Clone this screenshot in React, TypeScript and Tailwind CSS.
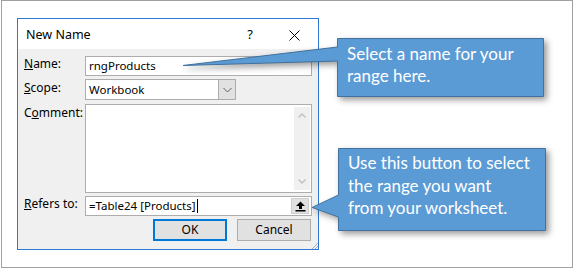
import React from "react";

const ui = { fontFamily: '"Noto Sans", "Open Sans", sans-serif' };
const call = { fontFamily: 'Lato, "Noto Sans", sans-serif' };

function Label({ children }: { children: React.ReactNode }) {
  return (
    <div className="w-[61px] shrink-0 text-[12px] leading-[12px] text-[#000]" style={ui}>
      {children}
    </div>
  );
}

export default function App() {
  return (
    <div className="relative w-[574px] h-[270px] bg-white overflow-hidden">
      <div className="ml-[1px] w-[572px] h-[268px] border border-[#a0a0a0] bg-white pl-[15px] pt-[17px]">
        {/* Dialog */}
        <div className="w-[302px] h-[232px] border border-[#2b79d2] bg-[#f0f0f0] flex flex-col" style={ui}>
          {/* title bar */}
          <div className="h-[30px] bg-white flex items-center pl-[8px] shrink-0">
            <span className="text-[12.5px] text-black mt-[2px]">New Name</span>
            <span className="ml-auto text-[13px] text-black mt-[2px]">?</span>
            <svg width="11" height="11" viewBox="0 0 11 11" className="ml-[36px] mr-[18px] mt-[2px]">
              <path d="M0.5 0.5 L10.5 10.5 M10.5 0.5 L0.5 10.5" stroke="#000" strokeWidth="1" />
            </svg>
          </div>
          {/* body */}
          <div className="flex-1 pl-[6px] pr-[6px] pt-[7px] flex flex-col relative">
            {/* Name */}
            <div className="flex items-start h-[20px]">
              <Label>
                <div className="pt-[2px]"><span className="underline">N</span>ame:</div>
              </Label>
              <div className="w-[227px] h-[20px] border border-[#adadad] bg-white flex items-center pl-[3px] text-[11.5px] text-black">
                rngProducts
              </div>
            </div>
            {/* Scope */}
            <div className="flex items-start h-[21px] mt-[3px]">
              <Label>
                <div className="pt-[3px]"><span className="underline">S</span>cope:</div>
              </Label>
              <div className="w-[151px] h-[21px] border border-[#adadad] bg-white flex items-stretch text-[11.5px] text-black">
                <div className="flex-1 flex items-center pl-[3px]">Workbook</div>
                <div className="w-[17px] bg-[#e1e1e1] border-l border-[#adadad] flex items-center justify-center">
                  <svg width="9" height="6" viewBox="0 0 9 6">
                    <path d="M0.5 1 L4.5 5 L8.5 1" fill="none" stroke="#606060" strokeWidth="1" />
                  </svg>
                </div>
              </div>
            </div>
            {/* Comment */}
            <div className="flex items-start h-[89px] mt-[4px]">
              <Label>
                <div className="pt-[3px]">C<span className="underline">o</span>mment:</div>
              </Label>
              <div className="w-[227px] h-[89px] border border-[#adadad] bg-white flex justify-end pt-[2px] pb-[2px] pr-[1px]">
                <div className="w-[16px] h-full bg-[#f0f0f0] flex flex-col items-center justify-between py-[6px]">
                  <svg width="8" height="5" viewBox="0 0 8 5">
                    <path d="M0.5 4.5 L4 1 L7.5 4.5" fill="none" stroke="#c2c2c2" strokeWidth="1.5" />
                  </svg>
                  <svg width="8" height="5" viewBox="0 0 8 5">
                    <path d="M0.5 0.5 L4 4 L7.5 0.5" fill="none" stroke="#c2c2c2" strokeWidth="1.5" />
                  </svg>
                </div>
              </div>
            </div>
            {/* Refers to */}
            <div className="flex items-start h-[20px] mt-[3px]">
              <Label>
                <div className="pt-[2px]"><span className="underline">R</span>efers to:</div>
              </Label>
              <div className="w-[227px] h-[20px] border border-[#adadad] bg-white flex items-center text-[11.5px] text-black">
                <div className="flex-1 flex items-center pl-[3px]">
                  <span>=Table24 [Products]</span>
                  <span className="w-[1px] h-[14px] bg-black ml-[1px]" />
                </div>
                <div className="w-[18px] h-[16px] mr-[2px] bg-[#e1e1e1] border border-[#cfcfcf] flex items-center justify-center">
                  <svg width="11" height="11" viewBox="0 0 11 11">
                    <path d="M5.5 0.5 L10 5 L7 5 L7 8 L4 8 L4 5 L1 5 Z" fill="#000" />
                    <rect x="0.5" y="9" width="10" height="1.5" fill="#000" />
                  </svg>
                </div>
              </div>
            </div>
            {/* Buttons */}
            <div className="flex justify-end mt-[3px] pr-[1px]">
              <div className="w-[74px] h-[22px] border-2 border-[#0078d7] bg-[#e1e1e1] flex items-center justify-center text-[12px] text-black">
                OK
              </div>
              <div className="w-[74px] h-[22px] border border-[#adadad] bg-[#e1e1e1] flex items-center justify-center text-[12px] text-black ml-[10px]">
                Cancel
              </div>
            </div>
            {/* resize grip */}
            <svg width="7" height="7" viewBox="0 0 7 7" className="absolute right-[0px] bottom-[0px]">
              <path d="M1 7 L7 1 M4 7 L7 4" stroke="#b0b0b0" strokeWidth="1" />
            </svg>
          </div>
        </div>
      </div>

      {/* Callout shapes */}
      <svg
        width="574"
        height="270"
        viewBox="0 0 574 270"
        className="absolute left-0 top-0 pointer-events-none"
        style={{ filter: "drop-shadow(3px 3px 3px rgba(0,0,0,0.4))" }}
      >
        <path
          d="M337.5 38.5 H543.5 V96.5 H337.5 V61 L183 65.5 L337.5 47 Z"
          fill="#5b9bd5"
          stroke="#41719c"
          strokeWidth="1"
          strokeLinejoin="miter"
        />
        <path
          d="M338.5 148.5 H545.5 V230.5 H338.5 V217 L312 207.5 L338.5 195 Z"
          fill="#5b9bd5"
          stroke="#41719c"
          strokeWidth="1"
          strokeLinejoin="miter"
        />
      </svg>
      <div
        className="absolute left-[347px] top-[43px] w-[196px] text-[17px] leading-[22px] text-white"
        style={call}
      >
        Select a name for your
        <br />
        range here.
      </div>
      <div
        className="absolute left-[348px] top-[152px] w-[196px] text-[17px] leading-[22.5px] text-white"
        style={call}
      >
        Use this button to select
        <br />
        the range you want
        <br />
        from your worksheet.
      </div>
    </div>
  );
}
